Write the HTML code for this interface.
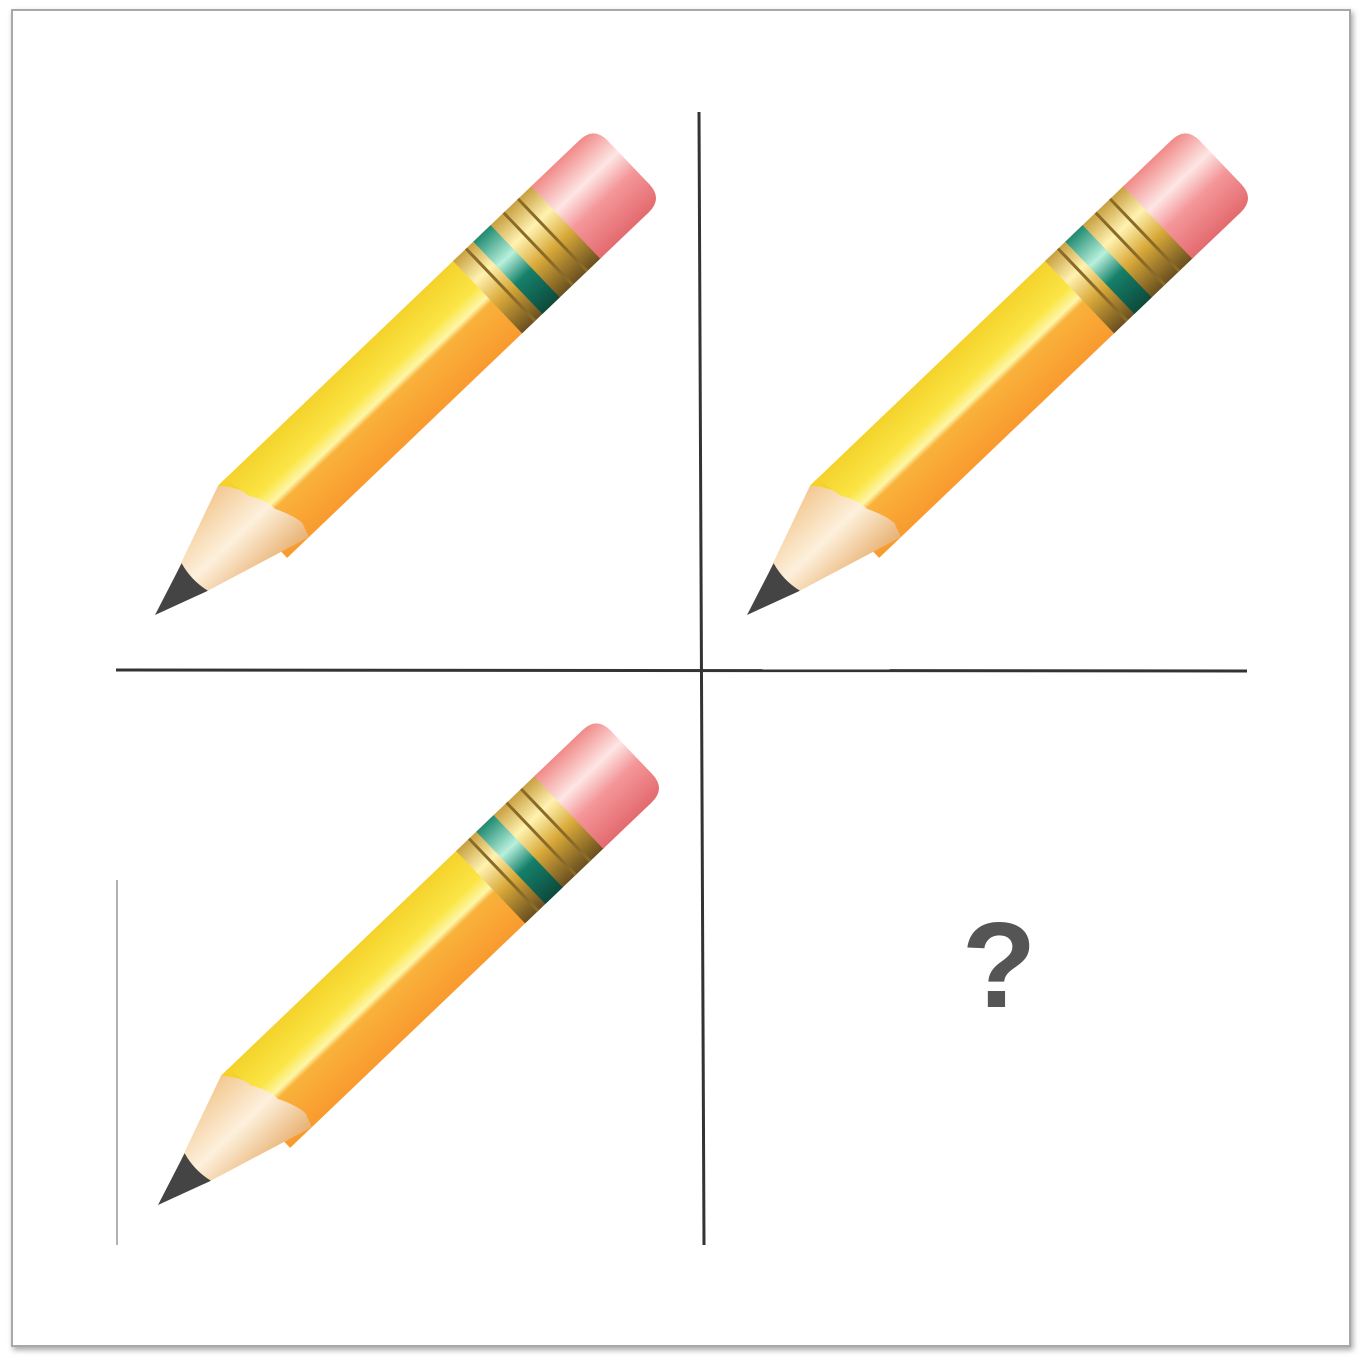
<!DOCTYPE html>
<html><head><meta charset="utf-8"><style>
html,body{margin:0;padding:0;background:#fff;}
body{width:1362px;height:1361px;position:relative;overflow:hidden;}
</style></head><body>
<svg width="1362" height="1361" viewBox="0 0 1362 1361" xmlns="http://www.w3.org/2000/svg" style="position:absolute;left:0;top:0">
<defs>
  <filter id="sh" x="-5%" y="-5%" width="110%" height="110%">
    <feDropShadow dx="2" dy="3" stdDeviation="3" flood-color="#000" flood-opacity="0.35"/>
  </filter>
  <linearGradient id="yel" x1="0" y1="0" x2="0" y2="1">
    <stop offset="0" stop-color="#f4d22a"/>
    <stop offset="0.35" stop-color="#fbe545"/>
    <stop offset="0.5" stop-color="#fdf6a8"/>
    <stop offset="0.56" stop-color="#f9b23c"/>
    <stop offset="1" stop-color="#f99a2e"/>
  </linearGradient>
  <linearGradient id="gold" x1="0" y1="0" x2="0" y2="1">
    <stop offset="0" stop-color="#c8a040"/>
    <stop offset="0.3" stop-color="#fff2b0"/>
    <stop offset="0.6" stop-color="#d8a838"/>
    <stop offset="1" stop-color="#6a5020"/>
  </linearGradient>
  <linearGradient id="grn" x1="0" y1="0" x2="0" y2="1">
    <stop offset="0" stop-color="#1f8a70"/>
    <stop offset="0.35" stop-color="#b8f0dc"/>
    <stop offset="0.6" stop-color="#15806a"/>
    <stop offset="1" stop-color="#0d4a3c"/>
  </linearGradient>
  <linearGradient id="pink" x1="0" y1="0" x2="0" y2="1">
    <stop offset="0" stop-color="#f08a88"/>
    <stop offset="0.35" stop-color="#fde6e4"/>
    <stop offset="0.6" stop-color="#f4979a"/>
    <stop offset="1" stop-color="#e36a6e"/>
  </linearGradient>
  <linearGradient id="wood" x1="0" y1="0" x2="0" y2="1">
    <stop offset="0" stop-color="#f3c890"/>
    <stop offset="0.5" stop-color="#fdf0dc"/>
    <stop offset="1" stop-color="#e8b070"/>
  </linearGradient>
  <g id="pencil">
    <!-- body -->
    <rect x="135" y="-50" width="330" height="100" fill="url(#yel)"/>
    <!-- wood cone with scallops -->
    <path d="M48,-17 L135,-50 Q150,-34 150,-22 Q160,-6 160,6 Q170,26 170,36 L165,50 L48,17 Z" fill="url(#wood)"/>
    <path d="M135,-50 Q150,-34 150,-22 L145,-50Z" fill="#f4d22a"/>
    <path d="M150,-22 Q160,-6 160,6 L175,6 L175,-22 Z" fill="#fbe545" opacity="0"/>
    <!-- lead -->
    <path d="M0,0 L55,-19 Q50,0 55,19 Z" fill="#444"/>
    <!-- ferrule -->
    <rect x="460" y="-50" width="110" height="100" fill="url(#gold)"/>
    <rect x="488" y="-50" width="24" height="100" fill="url(#grn)"/>
    <line x1="478" y1="-50" x2="478" y2="50" stroke="#8a6a28" stroke-width="3"/>
    <line x1="530" y1="-50" x2="530" y2="50" stroke="#8a6a28" stroke-width="3"/>
    <line x1="550" y1="-50" x2="550" y2="50" stroke="#8a6a28" stroke-width="3"/>
    <!-- eraser -->
    <path d="M568,-50 L635,-50 Q655,-50 655,-30 L655,30 Q655,50 635,50 L568,50 Z" fill="url(#pink)"/>
  </g>
</defs>
<rect x="12" y="10" width="1338" height="1336" fill="#fff" stroke="#a8a8a8" stroke-width="2" filter="url(#sh)"/>
<!-- grid lines -->
<line x1="699" y1="112" x2="704" y2="1245" stroke="#333" stroke-width="3"/>
<line x1="116" y1="670" x2="1247" y2="671" stroke="#333" stroke-width="3"/>
<line x1="117" y1="880" x2="117" y2="1245" stroke="#999" stroke-width="1.5"/>
<!-- pencils -->
<use href="#pencil" transform="translate(155,615) rotate(-43.7)"/>
<use href="#pencil" transform="translate(747,615) rotate(-43.7)"/>
<use href="#pencil" transform="translate(158,1205) rotate(-43.7)"/>
<text x="999" y="1007" text-anchor="middle" font-family="Liberation Sans, sans-serif" font-weight="bold" font-size="122" fill="#555">?</text>
</svg>
</body></html>
